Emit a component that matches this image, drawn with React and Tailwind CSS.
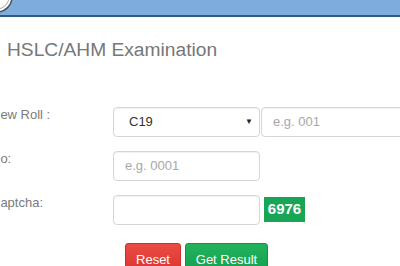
export default function App() {
  return (
    <div className="w-[400px] h-[266px] overflow-hidden bg-white" style={{ fontFamily: '"Liberation Sans", Arial, sans-serif' }}>
      <div className="h-[17px] bg-[#7eaddb] border-b-2 border-[#2b5a86] flex items-start">
        <svg width="14" height="15" viewBox="0 0 14 15" className="shrink-0">
          <circle cx="-3" cy="-3" r="15" fill="#ffffff" stroke="#4a4f57" strokeWidth="1.5" />
          <circle cx="-3" cy="-3" r="12" fill="none" stroke="#8a8f96" strokeWidth="0.8" />
        </svg>
      </div>

      <h1 className="mt-[22px] ml-[7px] text-[19.2px] leading-[21px] text-[#777777] font-normal">
        HSLC/AHM Examination
      </h1>

      <div className="mt-[47px] ml-[-9px]">
        <div className="flex items-start">
          <label className="w-[122px] shrink-0 pt-[1px] text-[13px] leading-[13px] text-[#7a7a7a]">New Roll :</label>
          <div className="w-[147px] h-[30px] shrink-0 border border-[#d6d6d6] rounded-[4px] flex items-center justify-between pl-[15px] pr-[6px] text-[13px] text-[#333333] shadow-[inset_0_1px_1px_rgba(0,0,0,0.06)]">
            <span>C19</span>
            <span className="text-[8px] text-[#222222]">▼</span>
          </div>
          <div className="ml-[1px] w-[200px] h-[30px] shrink-0 border border-[#d6d6d6] rounded-[4px] flex items-center pl-[11px] text-[13px] text-[#a8a8a8] shadow-[inset_0_1px_1px_rgba(0,0,0,0.06)]">
            e.g. 001
          </div>
        </div>

        <div className="flex items-start mt-[14px]">
          <label className="w-[122px] shrink-0 pt-[1px] text-[13px] leading-[13px] text-[#7a7a7a]">No:</label>
          <div className="w-[147px] h-[30px] shrink-0 border border-[#d6d6d6] rounded-[4px] flex items-center pl-[11px] text-[13px] text-[#a8a8a8] shadow-[inset_0_1px_1px_rgba(0,0,0,0.06)]">
            e.g. 0001
          </div>
        </div>

        <div className="flex items-start mt-[14px]">
          <label className="w-[122px] shrink-0 pt-[1px] text-[13px] leading-[13px] text-[#7a7a7a]">Captcha:</label>
          <div className="w-[147px] h-[30px] shrink-0 border border-[#d6d6d6] rounded-[4px] shadow-[inset_0_1px_1px_rgba(0,0,0,0.06)]" />
          <div className="ml-[4px] mt-[2px] w-[41px] h-[25px] bg-[#18a555] text-white font-bold text-[15px] flex items-center justify-center">
            6976
          </div>
        </div>

        <div className="flex gap-[4px] mt-[18px] ml-[134px]">
          <button className="w-[56px] h-[34px] rounded-[3px] bg-gradient-to-b from-[#ec4a44] to-[#d9332e] border border-[#c9302c] text-white text-[13px]">
            Reset
          </button>
          <button className="w-[83px] h-[34px] rounded-[3px] bg-gradient-to-b from-[#22b25e] to-[#139e4e] border border-[#12914a] text-white text-[13px]">
            Get Result
          </button>
        </div>
      </div>
    </div>
  )
}
